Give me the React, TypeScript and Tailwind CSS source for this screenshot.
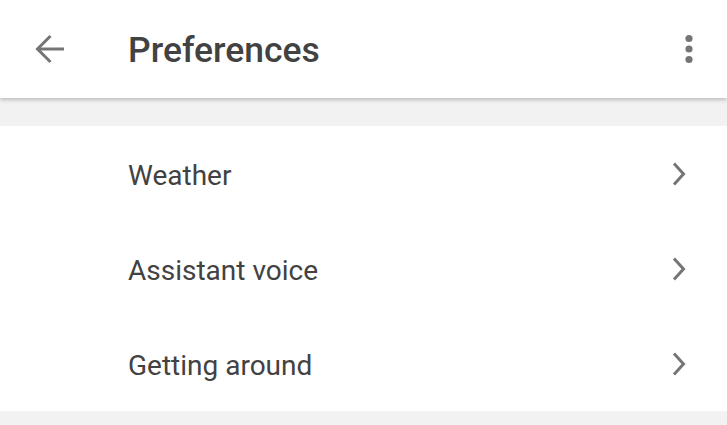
import React from "react";

const items = ["Weather", "Assistant voice", "Getting around"];

export default function App() {
  return (
    <div className="w-[727px] h-[425px] bg-[#f2f2f2] overflow-hidden" style={{ fontFamily: "Roboto, 'Liberation Sans', sans-serif" }}>
      <header className="relative z-10 h-[98px] bg-white flex items-center shadow-[0_2px_4px_rgba(0,0,0,0.22)]">
        <div className="w-[128px] flex items-center pl-[35px]">
          <svg width="30" height="30" viewBox="0 0 30 30" fill="none" stroke="#757575" strokeWidth="3">
            <path d="M2.5 15H29" />
            <path d="M15.5 2L2.5 15l13 13" />
          </svg>
        </div>
        <div className="flex-1 pt-[4px] text-[35.5px] font-medium text-[#424242] leading-none">Preferences</div>
        <div className="flex pr-[33px]">
          <svg width="10" height="30" viewBox="0 0 10 30" fill="#757575">
            <circle cx="5" cy="4.5" r="3.6" />
            <circle cx="5" cy="15" r="3.6" />
            <circle cx="5" cy="25.5" r="3.6" />
          </svg>
        </div>
      </header>
      <div className="h-[28px]" />
      <div className="bg-white flex flex-col">
        {items.map((t) => (
          <div key={t} className="h-[95px] flex items-center">
            <div className="pl-[128px] pt-[4px] flex-1 text-[28px] text-[#424242] leading-none">{t}</div>
            <div className="flex pr-[39px]">
              <svg width="18" height="28" viewBox="0 0 18 28" fill="none" stroke="#757575" strokeWidth="3">
                <path d="M4 3.5L13.5 14 4 24.5" />
              </svg>
            </div>
          </div>
        ))}
      </div>
    </div>
  );
}
